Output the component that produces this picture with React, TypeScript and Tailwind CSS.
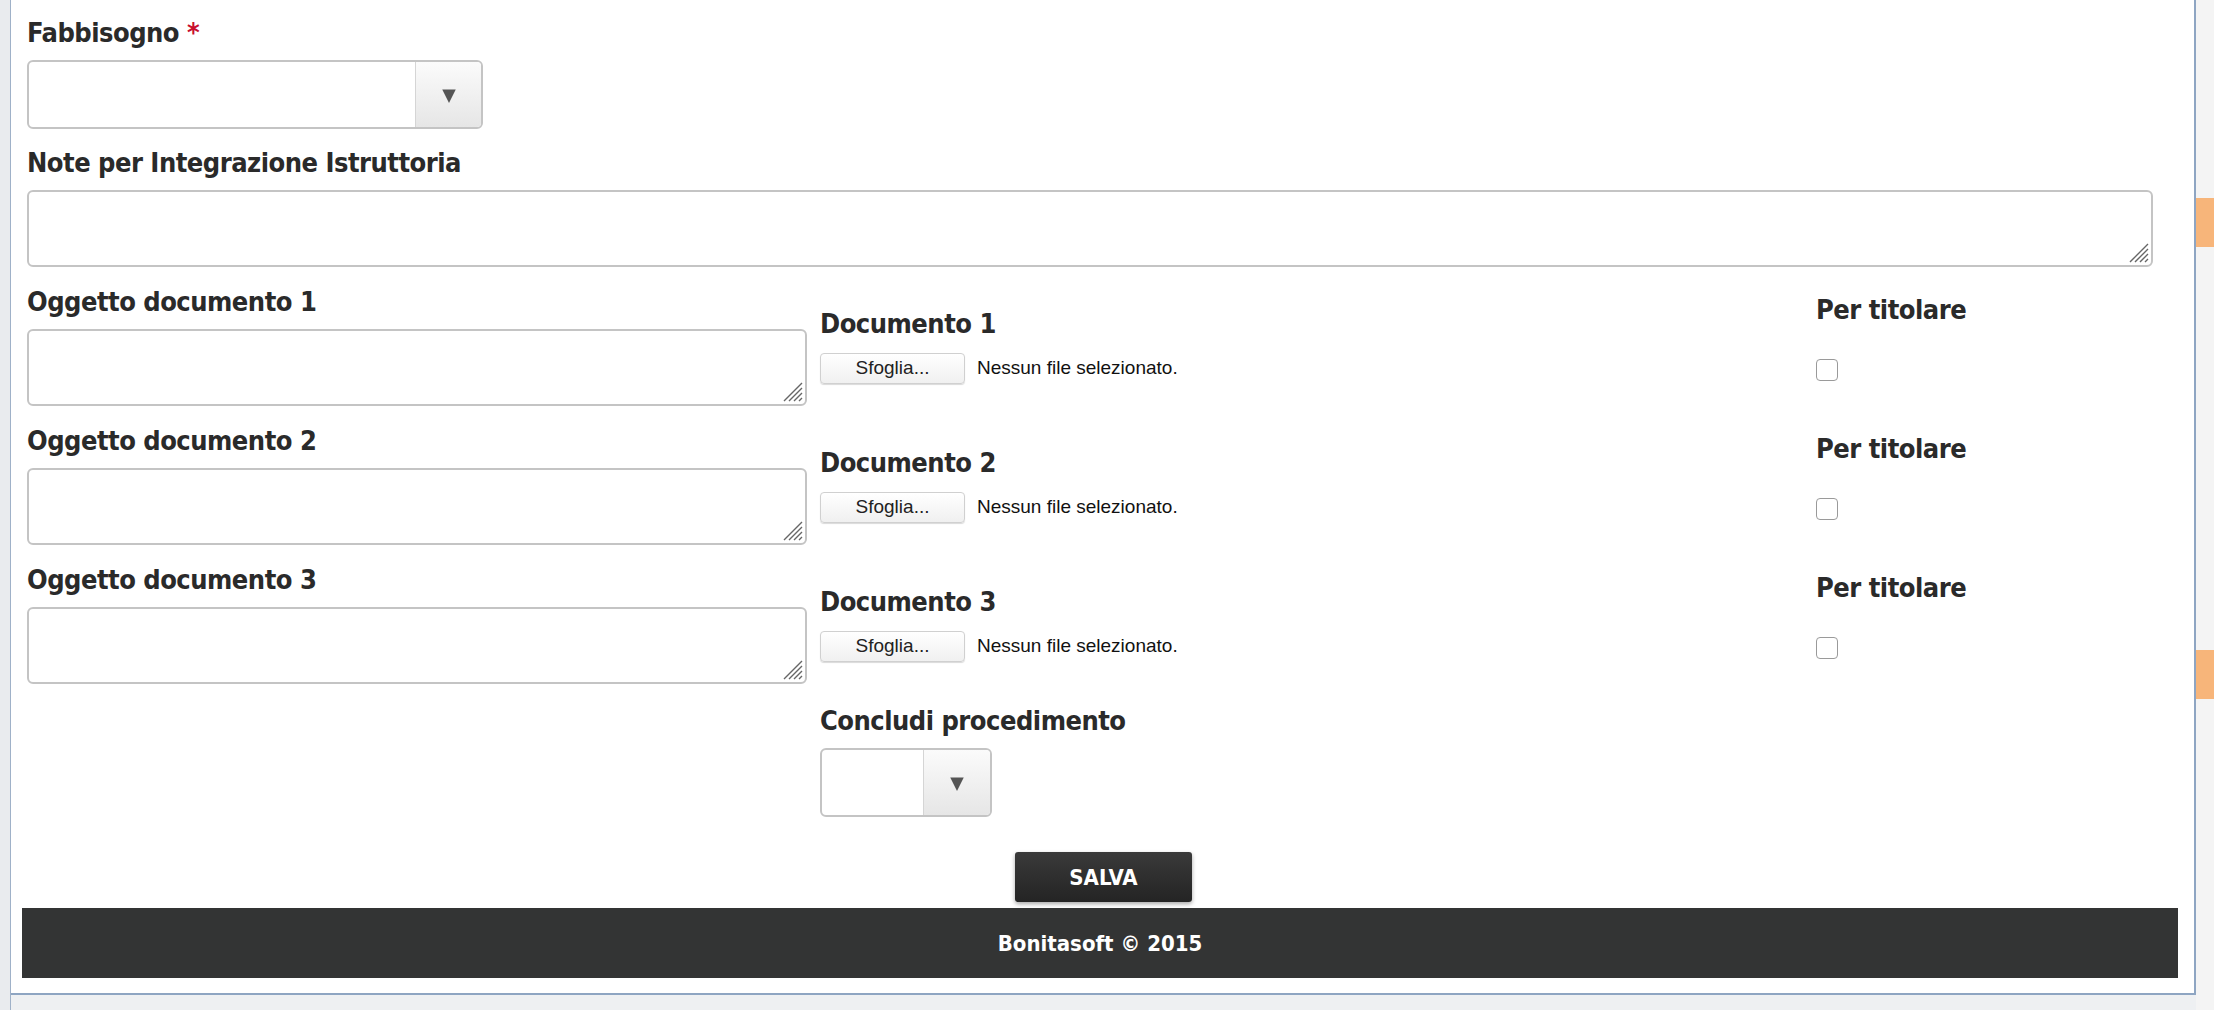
const font = { fontFamily: '"DejaVu Sans Condensed", "DejaVu Sans", sans-serif' };

function Grip() {
  return (
    <svg className="absolute bottom-[2px] right-[2px]" width="22" height="22" viewBox="0 0 22 22">
      <path d="M21 3 L3 21 M21 8 L8 21 M21 13 L13 21 M21 18 L18 21" stroke="#666" strokeWidth="1.4" />
    </svg>
  );
}

function Select({ w, arrow }: { w: string; arrow: string }) {
  return (
    <div className={`flex h-[69px] ${w} rounded-[6px] border-2 border-[#c4c4c4] overflow-hidden bg-white`}>
      <div className="flex-1" />
      <div className={`${arrow} flex items-center justify-center border-l border-[#d5d5d5] bg-gradient-to-b from-[#fbfbfb] to-[#e6e6e6]`}>
        <svg width="18" height="18" viewBox="0 0 16 16"><path d="M2 3 H14 L8 15 Z" fill="#555" /></svg>
      </div>
    </div>
  );
}

function Label({ children }: { children: React.ReactNode }) {
  return <div className="text-[27px] font-semibold text-[#2a2a2a] leading-[34px] tracking-[-0.5px]">{children}</div>;
}

function DocRow({ n }: { n: number }) {
  return (
    <div className="flex h-[139px]">
      <div className="w-[793px]">
        <Label>Oggetto documento {n}</Label>
        <div className="relative mt-[10px] h-[77px] w-[780px] rounded-[6px] border-2 border-[#c4c4c4]"><Grip /></div>
      </div>
      <div className="w-[996px] pt-[22px]">
        <Label>Documento {n}</Label>
        <div className="mt-[12px] flex items-center gap-[12px]" style={{ fontFamily: '"Liberation Sans", sans-serif' }}>
          <div className="flex h-[31px] w-[145px] items-center justify-center rounded-[4px] border border-[#d0d0d0] bg-gradient-to-b from-white to-[#f0f0f0] text-[19px] text-[#222] shadow-[0_1px_1px_rgba(0,0,0,0.15)]">Sfoglia...</div>
          <span className="text-[19px] text-[#111]">Nessun file selezionato.</span>
        </div>
      </div>
      <div className="pt-[8px]">
        <Label>Per titolare</Label>
        <div className="mt-[32px] h-[22px] w-[22px] rounded-[4px] border border-[#9a9a9a] bg-white" />
      </div>
    </div>
  );
}

export default function App() {
  return (
    <div className="flex h-[1010px] w-[2214px] bg-[#eef0f2] overflow-hidden" style={font}>
      <div className="w-[11px] bg-[#e9ebee] border-r border-[#9fb1c8]" />
      <div className="flex h-[995px] w-[2185px] flex-col bg-white border-b-2 border-r-2 border-[#8ea5c2]">
        <div className="px-[16px] pt-[16px]">
          <Label>Fabbisogno <span className="text-[#c8102e]">*</span></Label>
          <div className="mt-[10px]"><Select w="w-[456px]" arrow="w-[66px]" /></div>
          <div className="mt-[17px]"><Label>Note per Integrazione Istruttoria</Label></div>
          <div className="relative mt-[10px] h-[77px] w-[2126px] rounded-[6px] border-2 border-[#c4c4c4]"><Grip /></div>
          <div className="mt-[18px]">
            <DocRow n={1} />
            <DocRow n={2} />
            <DocRow n={3} />
          </div>
          <div className="ml-[793px] mt-[2px]">
            <Label>Concludi procedimento</Label>
            <div className="mt-[10px]"><Select w="w-[172px]" arrow="w-[67px]" /></div>
          </div>
          <div className="mt-[35px] flex justify-center pl-[2px]">
            <button className="h-[50px] w-[177px] rounded-[3px] bg-gradient-to-b from-[#3a3a3a] to-[#242424] text-[22px] font-bold text-white shadow-[0_2px_4px_rgba(0,0,0,0.35)]">SALVA</button>
          </div>
        </div>
        <div className="mx-[11px] mt-[6px] flex h-[70px] w-[2156px] items-center justify-center bg-[#333434] text-[22px] font-bold text-white">
          Bonitasoft © 2015
        </div>
      </div>
      <div className="flex flex-1 flex-col bg-[#f4f4f4]">
        <div className="mt-[198px] h-[49px] bg-[#f7b57a]" />
        <div className="mt-[403px] h-[49px] bg-[#f7b57a]" />
      </div>
    </div>
  );
}
